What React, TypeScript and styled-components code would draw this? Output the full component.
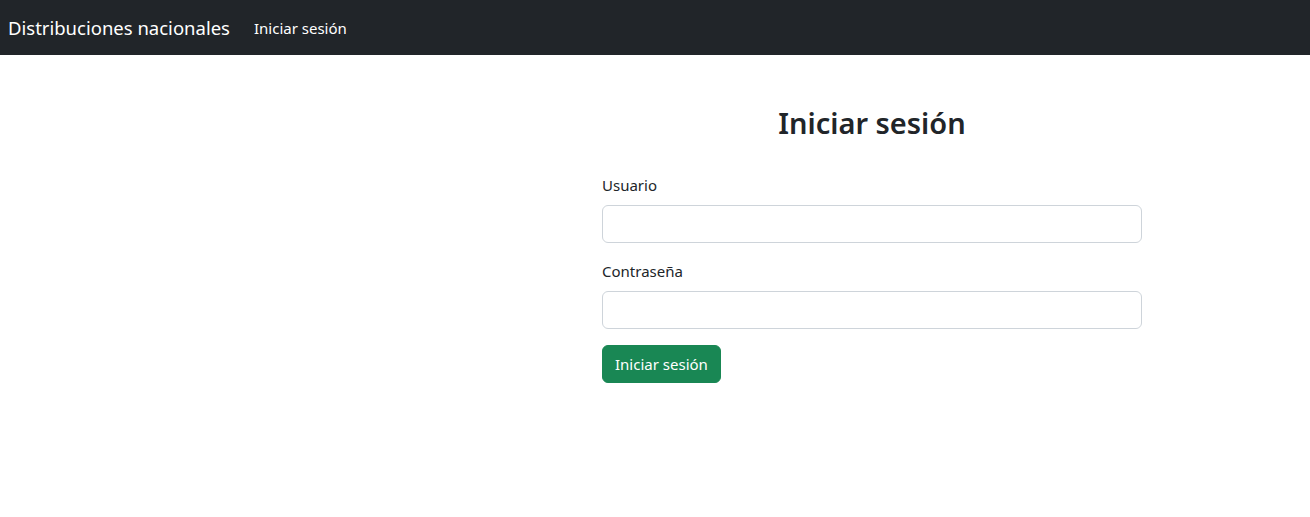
import styled, { createGlobalStyle } from "styled-components";

const GlobalStyle = createGlobalStyle`
  body {
    margin: 0;
    font-family: "Noto Sans", "Open Sans", sans-serif;
    font-size: 15px;
    line-height: 24px;
    color: #212529;
    background: #fff;
  }
  * {
    box-sizing: border-box;
  }
`;

const Navbar = styled.nav`
  background-color: #212529;
  height: 55px;
  display: flex;
  align-items: center;
  padding: 0 8px;
`;

const Brand = styled.a`
  color: #fff;
  font-size: 18.5px;
  margin-right: 16px;
  text-decoration: none;
  line-height: 30px;
`;

const NavLink = styled.a`
  color: #fff;
  font-size: 15px;
  padding: 8px;
  text-decoration: none;
`;

const Row = styled.main`
  display: grid;
  grid-template-columns: 602px 540px;
  padding-top: 49px;
`;

const FormCol = styled.form`
  grid-column: 2;
  display: flex;
  flex-direction: column;
`;

const Title = styled.h2`
  margin: 0 0 31px;
  font-size: 29px;
  font-weight: 600;
  line-height: 38px;
  text-align: center;
`;

const Field = styled.div`
  margin-bottom: 16px;
`;

const Label = styled.label`
  display: block;
  margin-bottom: 8px;
`;

const Input = styled.input`
  display: block;
  width: 100%;
  height: 38px;
  padding: 6px 12px;
  font: inherit;
  color: #212529;
  border: 1px solid #ced4da;
  border-radius: 6px;
  background: #fff;
`;

const Button = styled.button`
  align-self: flex-start;
  height: 38px;
  padding: 6px 12px;
  font: inherit;
  color: #fff;
  background-color: #198754;
  border: 1px solid #198754;
  border-radius: 6px;
  cursor: pointer;
`;

export default function App() {
  return (
    <>
      <GlobalStyle />
      <Navbar>
        <Brand href="#">Distribuciones nacionales</Brand>
        <NavLink href="#">Iniciar sesión</NavLink>
      </Navbar>
      <Row>
        <FormCol onSubmit={(e) => e.preventDefault()}>
          <Title>Iniciar sesión</Title>
          <Field>
            <Label htmlFor="usuario">Usuario</Label>
            <Input id="usuario" type="text" />
          </Field>
          <Field>
            <Label htmlFor="clave">Contraseña</Label>
            <Input id="clave" type="password" />
          </Field>
          <Button type="submit">Iniciar sesión</Button>
        </FormCol>
      </Row>
    </>
  );
}
